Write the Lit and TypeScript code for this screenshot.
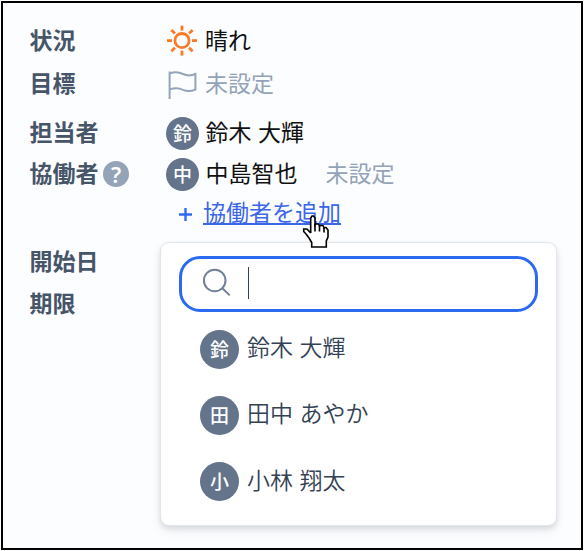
import { LitElement, html, css, svg } from "lit";
import { customElement, property } from "lit/decorators.js";

const sun = html`<svg class="icon sun" width="32" height="32" viewBox="0 0 32 32">
  <circle cx="16" cy="15.6" r="7.1"></circle>
  ${[0, 45, 90, 135, 180, 225, 270, 315].map(
    (a) => svg`<line x1="16" y1="0.6" x2="16" y2="5.6" transform="rotate(${a} 16 15.6)"></line>`
  )}
</svg>`;

const flag = html`<svg class="icon flag" width="32" height="32" viewBox="0 0 32 32">
  <path d="M3.6 3.6V31M3.6 5.6C9 3.4 13 4.2 17 6C21 7.8 25 8 29.4 6V21.6C25 23.4 21 23.6 17 21.8C13 19.8 9 19.6 3.6 21.4"></path>
</svg>`;

const lens = html`<svg class="lens" width="30" height="30" viewBox="0 0 30 30">
  <circle cx="12.7" cy="12.5" r="10.8"></circle>
  <path d="M20.4 20.2L27.7 27.4"></path>
</svg>`;

const pointer = html`<svg class="pointer" width="28" height="35" viewBox="0 0 28 35">
  <path
    d="M8.7 19V4L10 2H11.5L13 4V11L14 10H16.5L17.5 12L18.5 11.5H21L22 14L23 13.5H24L26 16V23L24.3 27V33H9.7V28.5L7 24L4 20L1.7 17.5V15H5L8.7 19"
  ></path>
  <path d="M13 10V17.5M17.5 12V17.5M22 14V18.5"></path>
</svg>`;

@customElement("user-avatar")
class UserAvatar extends LitElement {
  @property() char = "";
  static styles = css`
    :host {
      display: flex;
      align-items: center;
      justify-content: center;
      flex: none;
      box-sizing: border-box;
      width: 33px;
      height: 33px;
      padding-bottom: 2px;
      border-radius: 50%;
      background: #64748b;
      color: #fff;
      font-size: 19px;
      font-weight: 500;
      line-height: 1;
    }
  `;
  render() {
    return html`<span>${this.char}</span>`;
  }
}

@customElement("app-root")
class AppRoot extends LitElement {
  static styles = css`
    :host {
      display: block;
      position: relative;
      box-sizing: border-box;
      width: 584px;
      height: 551px;
      padding: 1px;
      background: #fff;
      font-family: "Noto Sans CJK JP", sans-serif;
      font-size: 23px;
      line-height: 34px;
      word-spacing: 1.3px;
      color: #111;
    }
    .frame {
      box-sizing: border-box;
      width: 582px;
      height: 549px;
      border: 2px solid #000;
      background: #fcfdff;
      padding: 16px 0 0 26.5px;
    }
    .row {
      display: flex;
      align-items: center;
      height: 42px;
      white-space: nowrap;
    }
    .r1 { height: 43px; }
    .r2 { height: 44px; margin-bottom: 6px; }
    .r4 { height: 40px; }
    .r5 { height: 38px; margin-bottom: 9px; }
    .label {
      display: flex;
      align-items: center;
      width: 136.5px;
      color: #475569;
      font-weight: 700;
    }
    .text { padding-bottom: 4px; }
    .help {
      width: 26px;
      height: 26px;
      margin-left: 4.5px;
      border-radius: 50%;
      background: #94a3b8;
      color: #fff;
      font: 600 22px/26px "Noto Sans", sans-serif;
      text-align: center;
    }
    .value {
      display: flex;
      align-items: center;
    }
    .value > user-avatar { margin-right: 6.5px; }
    .muted { color: #94a3b8; }
    .next { margin-left: 28px; }
    .icon {
      margin-right: 7px;
      fill: none;
    }
    .sun { stroke: #fa7b26; stroke-width: 2.8; }
    .flag { stroke: #94a3b8; stroke-width: 2; }
    .plus {
      width: 13px;
      height: 13px;
      margin: 3px 11.5px 0 12.5px;
      stroke: #2f6bed;
      stroke-width: 2.4;
    }
    .add {
      color: #3b66e8;
      text-decoration: underline;
      text-decoration-thickness: 2px;
      text-decoration-skip-ink: none;
      text-underline-offset: 2px;
    }
    .panel {
      position: absolute;
      left: 160px;
      top: 242px;
      box-sizing: border-box;
      width: 397px;
      height: 284px;
      padding: 13px 18px 0;
      border: 1px solid #e2e5ea;
      border-radius: 9px;
      background: #fff;
      box-shadow: 0 3px 5px rgba(30, 41, 59, 0.12), 0 5px 12px rgba(30, 41, 59, 0.06);
      color: #334155;
    }
    .search {
      display: flex;
      align-items: center;
      box-sizing: border-box;
      height: 56px;
      padding: 0 0 2px 20px;
      border: 3px solid #2b69ee;
      border-radius: 21px;
    }
    .lens {
      fill: none;
      stroke: #71819a;
      stroke-width: 2;
    }
    .caret {
      width: 1px;
      height: 32px;
      margin-left: 16px;
      background: #334155;
    }
    .option {
      display: flex;
      align-items: center;
      height: 66.3px;
      padding-left: 21px;
      font-weight: 350;
    }
    .options { padding-top: 4px; }
    .option .text { padding-bottom: 6px; }
    .option user-avatar {
      width: 39px;
      height: 39px;
      margin-right: 8px;
    }
    .pointer {
      position: absolute;
      left: 302px;
      top: 214px;
      fill: #fff;
      stroke: #000;
      stroke-width: 1.6;
    }
  `;
  render() {
    return html`
      <div class="frame">
        <div class="row r1"><div class="label"><span class="text">状況</span></div><div class="value">${sun}<span class="text">晴れ</span></div></div>
        <div class="row r2"><div class="label"><span class="text">目標</span></div><div class="value">${flag}<span class="text muted">未設定</span></div></div>
        <div class="row"><div class="label"><span class="text">担当者</span></div><div class="value"><user-avatar char="鈴"></user-avatar><span class="text">鈴木 大輝</span></div></div>
        <div class="row r4">
          <div class="label"><span class="text">協働者</span><span class="help">?</span></div>
          <div class="value"><user-avatar char="中"></user-avatar><span class="text">中島智也</span><span class="text muted next">未設定</span></div>
        </div>
        <div class="row r5">
          <div class="label"></div>
          <div class="value">
            <svg class="plus" viewBox="0 0 13 13"><path d="M6.5 0V13M0 6.5H13"></path></svg><span class="text add">協働者を追加</span>
          </div>
        </div>
        <div class="row"><div class="label"><span class="text">開始日</span></div></div>
        <div class="row"><div class="label"><span class="text">期限</span></div></div>
      </div>
      <div class="panel">
        <div class="search">${lens}<span class="caret"></span></div>
        <div class="options">
          ${[["鈴", "鈴木 大輝"], ["田", "田中 あやか"], ["小", "小林 翔太"]].map(
            ([c, name]) => html`<div class="option"><user-avatar char=${c}></user-avatar><span class="text">${name}</span></div>`
          )}
        </div>
      </div>
      ${pointer}
    `;
  }
}
